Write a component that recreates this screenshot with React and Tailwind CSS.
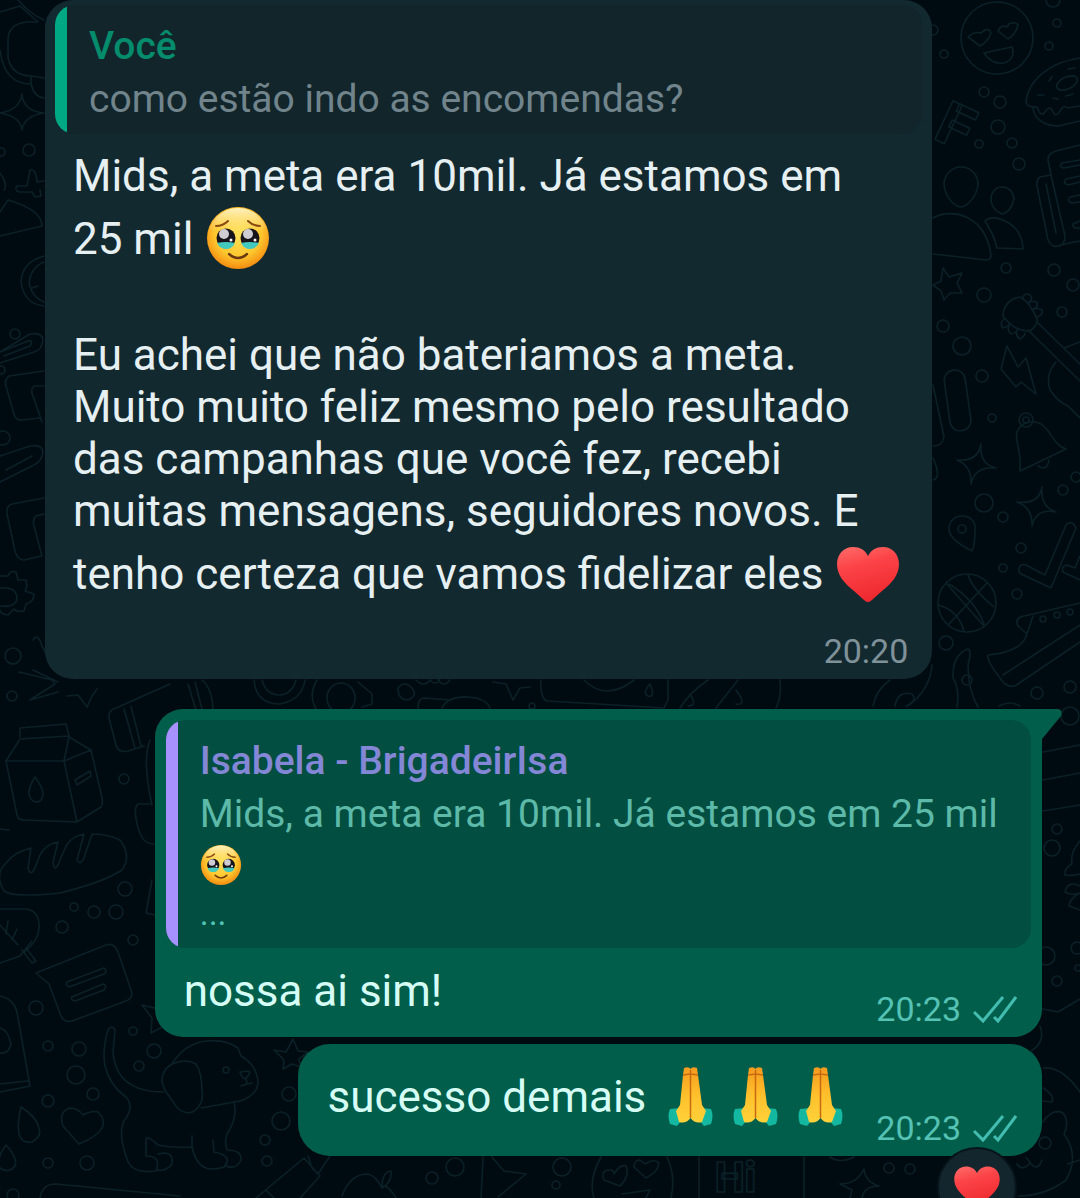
import { useId } from 'react';

const BUBBLES = [
  [1053, 0, 7], [1057, 23, 4], [1049, 46, 4], [933, 30, 5], [944, 54, 4], [984, 92, 5], [1000, 102, 6],
  [998, 127, 7], [979, 144, 4], [1012, 143, 5], [1019, 164, 6], [1006, 268, 5], [1054, 270, 6], [1073, 285, 6],
  [984, 295, 7], [1062, 312, 5], [943, 326, 6], [962, 346, 9], [982, 376, 6], [992, 418, 4], [984, 503, 9],
  [1003, 517, 5], [1021, 548, 5], [1003, 568, 4], [1017, 594, 5], [946, 643, 7], [1063, 490, 5], [1076, 477, 5],
  [1037, 693, 6], [1070, 687, 6], [1070, 716, 9], [1057, 829, 5], [1052, 848, 8], [1046, 956, 9], [1057, 981, 5],
  [1077, 948, 6], [1078, 968, 3], [29, 150, 6], [1, 152, 4], [15, 334, 5], [1, 370, 4], [3, 438, 7], [13, 656, 8],
  [12, 696, 5], [124, 779, 5], [125, 889, 7], [74, 907, 4], [94, 912, 6], [116, 912, 7], [62, 927, 6],
  [133, 940, 5], [36, 1008, 7], [48, 1046, 5], [79, 1049, 7], [76, 1075, 9], [48, 1101, 6],
  [93, 1094, 6], [133, 1031, 4], [154, 1051, 7], [139, 1066, 5], [48, 1163, 5], [87, 1163, 7], [289, 1094, 7],
  [281, 1121, 9], [265, 1140, 5], [267, 1161, 5], [432, 1178, 6], [455, 1167, 9], [562, 1167, 9], [556, 1185, 4],
  [889, 1168, 5], [910, 1169, 5], [13, 1195, 6], [435, 678, 5], [532, 706, 3],
];

const DOODLES = [
  // in-love face
  'M968 37L980 46Q988 42 991 33Q989 28 985 30L981 33Q974 31 968 37Z M998 31L1008 39Q1016 34 1018 25Q1015 21 1009 24L1007 27Q1001 24 998 31Z M984 53L1012 47Q1016 59 1004 63Q992 65 984 53Z',
  // donut
  'M1080 58C1050 62 1028 80 1026 102Q1028 108 1037 107Q1041 118 1045 112Q1050 104 1053 112Q1056 118 1060 111Q1064 104 1067 108L1080 106 M1033 108C1034 120 1046 126 1058 126L1080 121 M1049 81L1052 77 M1068 69L1075 68 M1038 95L1044 95 M1053 98L1058 99 M1066 96L1073 94',
  // people
  'M961 167C972 167 978 176 978 184C977 196 968 206 961 207C953 206 945 196 944 184C944 176 951 167 961 167Z M1002 187C1010 187 1014 194 1014 199C1012 208 1007 213 1002 214C996 212 991 206 991 199C991 193 995 187 1002 187Z M933 218C950 208 985 213 991 255Q991 260 986 260L933 254 M985 221Q990 216 1000 219Q1022 226 1023 249L997 248Q994 235 985 221Z',
  // notebook
  'M1080 145L1056 151Q1048 153 1048 160L1051 175L1040 177Q1036 180 1037 186L1048 240Q1052 248 1058 246L1065 244L1080 241 M1051 175L1065 236Q1065 243 1060 246 M1046 184L1056 233 M1080 160L1062 163Q1058 167 1064 168L1080 165 M1080 176L1066 179Q1062 183 1068 185L1080 182 M1080 195L1070 197Q1066 201 1072 203L1080 202 M1080 221L1073 224Q1072 229 1080 228',
  // stars
  'M943 268L949 277L962 273L957 283L962 293L950 293L944 300L941 291L933 285L941 281Z M142 1005L154 1008L160 1004 M142 1005L152 1018L151 1033L162 1027 M274 1050L286 1052L293 1039L298 1051L308 1052L299 1059L301 1067L292 1064L283 1069L284 1060Z M493 682L506 684L513 700L520 688L530 687',
  // brush
  'M1020 297Q1004 300 1003 316Q1015 332 1030 331Q1038 325 1037 319Q1030 302 1020 297Z M1028 330L1080 381 M1038 323L1080 364 M1023 298Q1024 292 1030 295Q1034 299 1028 303Q1032 300 1037 302Q1039 307 1032 310Q1037 307 1042 310Q1043 316 1036 317 M1004 319Q999 323 1003 328Q1008 327 1010 323Q1006 330 1011 334Q1016 333 1018 329Q1014 335 1020 339Q1025 336 1025 333 M1064 348L1080 342 M1056 362Q1045 374 1050 390Q1058 402 1068 406L1080 418',
  // bolt
  'M1007 346L1018 367L1026 358L1036 394L1021 382L1016 387L1001 369Z',
  // bell
  'M1020 471C1022 450 1014 440 1017 432Q1022 420 1036 422C1050 425 1052 445 1066 449Z M1038 466Q1047 472 1049 460',
  // sparkles
  'M981 444Q979 464 996 468Q975 466 971 484Q972 466 957 460Q978 462 981 444Z M1042 487Q1040 507 1056 512Q1036 508 1032 526Q1033 508 1017 502Q1039 505 1042 487Z M22 94Q23 111 44 113Q24 116 22 130Q20 116 0 113Q20 110 22 94Z M67 696L78 695L87 707L92 696L97 689 M864 1169Q865 1182 879 1186Q864 1186 862 1198 M864 1169Q857 1184 840 1184L852 1190L850 1198',
  // pin
  'M972 551C960 545 949 538 949 529C949 521 955 516 962 516C971 516 976 522 975 530C975 540 974 547 972 551Z',
  // ticks
  'M1019 569Q1020 563 1026 565L1045 575L1066 525Q1072 519 1076 528L1051 588L1021 574Q1018 572 1019 569Z M1080 580L1063 572Q1061 566 1067 565L1075 568L1080 556',
  // ball
  'M946 583L984 626 M948 625L987 583 M968 575Q973 590 994 607 M939 605Q960 612 964 632 M949 584Q975 600 984 624',
  // shoe
  'M1080 603L1020 617Q1015 620 1018 626L1027 634Q1022 652 988 655Q986 660 1000 678Q1006 688 1015 686L1080 642 M1003 675L1080 625 M1027 634L1033 616',
  'M957 707Q960 690 953 678Q952 655 968 649Q972 650 968 665Q968 690 978 707 M933 385L944 437Q943 446 933 446 M933 458Q942 478 933 480 M932 665Q930 690 908 706 M873 706Q876 690 890 680 M895 706Q898 690 912 694Q918 700 906 706 M999 706Q1010 700 1020 706',
  // shelf lines and plant
  'M1043 752L1080 745 M1043 780L1080 773 M1043 811L1080 805 M1080 841Q1070 852 1072 864Q1064 868 1065 875Q1072 876 1080 874 M1080 886Q1068 880 1065 892Q1072 896 1080 893Q1070 898 1069 906L1080 910 M1043 1009L1058 1012L1080 999 M1040 1026Q1046 1042 1031 1051 M1043 1068Q1062 1066 1080 1092 M1043 1088Q1055 1095 1052 1102L1043 1101',
  // cat
  'M1043 1122Q1052 1108 1063 1113Q1070 1122 1064 1134Q1080 1156 1066 1180Q1045 1196 1018 1196 M1068 1164L1080 1160 M1017 1164Q1022 1172 1030 1163Q1028 1158 1026 1158 M1030 1163Q1038 1172 1042 1160',
  // left column
  'M0 12L20 6L38 22L27 22Q8 24 8 40V58Q12 76 32 76L44 78 M0 50Q4 84 31 84V76 M31 84Q34 97 44 98 M18 0Q30 14 44 20 M30 170Q36 168 37 182L44 181 M30 170L27 186L17 186Q14 190 19 192L32 192L35 197L41 196L40 190 M0 236L42 226Q42 210 8 200L0 212 M0 173Q8 184 4 190 M44 256Q22 262 21 282Q24 304 44 306 M44 262Q30 268 29 284Q33 298 44 302 M32 288L38 286 M0 352L30 334Q42 332 43 340Q42 350 34 352L0 363 M4 356L30 346Q34 340 28 341L0 352 M44 371L9 376Q4 380 6 386L14 414Q16 421 22 420L40 418 M44 386L34 386Q30 390 33 396L42 422',
  // paper and clip
  'M0 456L30 446Q42 444 43 452Q42 462 32 466L0 482 M6 470L32 456 M44 498L12 504Q6 506 7 514L14 546Q16 560 24 560L42 556 M44 514L36 516Q32 520 34 526L42 556',
  // gear
  'M0 576L8 576Q10 570 16 572L18 580L26 580Q28 588 25 591L34 594Q34 602 26 604L24 611Q16 612 14 609L8 615Q0 614 0 610 M0 588Q16 586 17 598Q16 608 0 606',
  'M33 640Q38 632 42 646L56 672 M19 672L52 680L55 684L33 698L30 700L58 692 M33 670L58 682',
  // milk carton
  'M20 737V728L66 724L69 736L20 739L6 761L17 815Q18 820 24 820L77 822L101 807Q103 804 102 798L91 750L69 737L64 761L77 822 M6 761L64 761L91 750 M35 777Q28 788 29 795Q32 802 36 802Q43 802 43 793Q42 786 35 777Z M75 780L90 771L91 776L77 785Z',
  // torch
  'M170 684L116 708Q108 710 109 718L116 745Q118 753 128 751L144 746 M124 709L135 748 M131 706L141 746 M188 684L196 710 M195 682L202 709 M202 680Q212 688 213 709 M150 740Q142 760 152 805 M150 804L138 804Q134 808 136 818Q140 845 154 844 M152 880L146 913L155 915',
  // bread
  'M4 891Q-6 874 6 863Q14 852 31 848L28 868Q30 876 34 870L40 855Q46 844 58 842L53 862Q54 872 58 865L66 846Q72 836 84 834L77 860Q80 866 84 858L92 834Q108 834 120 840Q132 856 122 870Q104 882 60 893Q14 898 4 891Z M0 829L9 830',
  // leaf
  'M0 909L27 909Q40 912 39 928Q38 942 24 952 M0 925L18 945 M6 934L8 921 M12 940L17 929 M0 963L20 956L32 941 M22 950L32 963L36 961L26 948',
  // speech card
  'M36 973L106 945Q114 942 118 952L131 990Q134 998 126 1001L72 1021Q64 1023 61 1016L49 984Z M67 982L104 968Q108 971 104 974L69 987Q65 985 67 982Z M72 997L103 984Q108 986 104 990L75 1001Q70 1000 72 997Z',
  // jar
  'M0 996Q14 999 17 1012L30 1086L0 1092 M0 1084L28 1081 M0 1028Q8 1030 11 1044Q9 1054 0 1053',
  // dog
  'M162 1080Q162 1070 172 1064Q186 1058 196 1064Q203 1074 202 1100Q198 1112 188 1113Q178 1112 172 1100Q162 1088 162 1080Z M172 1064Q184 1044 206 1041Q226 1039 238 1048L241 1056Q258 1066 258 1084Q256 1096 240 1101L201 1108 M164 1092Q116 1092 113 1052L115 1030Q112 1024 108 1030Q102 1050 105 1066Q110 1086 126 1097Q134 1106 126 1118Q116 1130 128 1162Q134 1174 156 1171Q162 1156 146 1156V1140Q146 1134 158 1145Q172 1148 192 1147Q198 1176 224 1167Q234 1156 214 1152L213 1140 M158 1154Q174 1150 172 1164Q166 1172 156 1170 M234 1102Q238 1118 227 1134Q224 1140 227 1150Q242 1150 241 1160Q236 1170 226 1166 M192 1147V1136 M240 1072Q242 1080 246 1078Q252 1072 248 1071Z M246 1078L247 1084L241 1086 M247 1084L252 1083',
  // drops and heart
  'M21 1107Q17 1124 19 1134Q22 1144 32 1142Q42 1136 39 1128Q36 1116 21 1107Z M6 1145Q-4 1158 0 1168Q8 1174 15 1166Q18 1158 6 1145Z M79 1144L63 1126Q58 1112 70 1108Q78 1108 83 1115Q92 1110 98 1112Q106 1120 102 1128Q98 1136 79 1144Z',
  'M40 1198Q42 1184 56 1184L180 1196 M256 1198L304 1158L320 1176L300 1198 M308 1156L312 1168L318 1174L330 1156 M266 1190L274 1198 M342 1196Q350 1174 368 1174Q376 1176 382 1188Q386 1182 396 1198 M382 1188Q382 1172 391 1171Q392 1182 382 1188 M483 1157L481 1198 M492 1157L504 1171L526 1174L498 1197 M601 1157Q588 1180 594 1198 M667 1157Q676 1176 671 1198 M620 1186L604 1180Q600 1170 610 1170Q614 1170 614 1174Q620 1164 626 1166Q630 1176 620 1186Z M646 1178L634 1167Q634 1160 640 1160L645 1164Q654 1158 659 1163Q658 1172 646 1178Z M622 1194L650 1190L646 1198 M699 1157V1198 M804 1157V1198 M830 1157Q840 1164 854 1157',
  // strip between the messages
  'M254 680Q256 704 280 704Q302 700 305 680 M262 680Q266 695 280 695Q292 694 296 680 M317 680Q308 695 316 709 M358 682L372 694V704L362 707 M398 688Q398 700 408 700Q418 696 412 688Q404 680 398 688Z M416 680Q424 688 430 680 M438 680Q444 688 450 680 M418 708Q418 698 424 698L450 700 M442 708Q448 696 468 697Q486 698 490 708 M541 680Q540 700 548 701L664 708 M584 680Q606 702 634 680 M650 684Q642 694 648 696Q656 698 650 684Z M668 680V700L664 708 M708 680Q690 692 680 708 M738 680L716 708 M690 694Q698 706 688 706 M736 690Q748 706 736 704 M780 680Q782 696 776 708',
];

function Wallpaper() {
  return (
    <svg
      className="absolute inset-0 h-full w-full"
      viewBox="0 0 1080 1198"
      preserveAspectRatio="xMidYMin slice"
      fill="none"
      stroke="#0b2127"
      strokeWidth="1.6"
      strokeLinejoin="round"
      strokeLinecap="round"
      aria-hidden="true"
    >
      {BUBBLES.map(([x, y, r], i) => <circle key={i} cx={x} cy={y} r={r} />)}
      {DOODLES.map((d) => <path key={d} d={d} />)}
      <circle cx="997" cy="38" r="36" />
      <ellipse cx="1067" cy="83" rx="11" ry="6" transform="rotate(-25 1067 83)" />
      <rect x="947" y="370" width="21" height="61" rx="10" transform="rotate(-8 957 400)" />
      <circle cx="1026" cy="420" r="7" />
      <circle cx="1026" cy="420" r="3" />
      <circle cx="962" cy="529" r="4" />
      <circle cx="967" cy="603" r="29" />
      <circle cx="1043" cy="619" r="3" />
      <circle cx="1057" cy="615" r="3" />
      <circle cx="1070" cy="612" r="3" />
      <circle cx="967" cy="680" r="5" />
      <circle cx="226" cy="1070" r="3" />
      <circle cx="1045" cy="1143" r="6" />
      <ellipse cx="341" cy="698" rx="14" ry="15" />
      <g fontFamily="Roboto, sans-serif" fontWeight="900">
        <text x="932" y="138" fontSize="60" transform="rotate(25 932 138)">F</text>
        <text x="715" y="1192" fontSize="42">Hi</text>
      </g>
    </svg>
  );
}

function TearyFace({ className }) {
  const id = useId();
  return (
    <svg className={className} viewBox="0 0 68 64" role="img" aria-label="rosto segurando as lágrimas">
      <defs>
        <radialGradient id={id} cx="0.5" cy="0.42" r="0.58">
          <stop offset="0.1" stopColor="#ffdf55" />
          <stop offset="0.65" stopColor="#ffc72e" />
          <stop offset="1" stopColor="#f38b10" />
        </radialGradient>
        <linearGradient id={`${id}s`} x1="0" y1="0" x2="0" y2="1">
          <stop offset="0" stopColor="#fff6cf" stopOpacity="0.9" />
          <stop offset="0.4" stopColor="#fff0b0" stopOpacity="0" />
        </linearGradient>
      </defs>
      <circle cx="34" cy="32" r="31" fill={`url(#${id})`} />
      <circle cx="34" cy="32" r="30" fill={`url(#${id}s)`} />
      <path d="M12 20Q19 20 24 15M56 20Q49 20 44 15" fill="none" stroke="#8a4a12" strokeWidth="2" strokeLinecap="round" />
      {[22, 46].map((x) => (
        <g key={x}>
          <circle cx={x} cy="32" r="9.5" fill="#17141c" />
          <path d={`M${x - 9} 37Q${x} 35 ${x + 9} 37Q${x + 6} 43 ${x} 43Q${x - 6} 43 ${x - 9} 37Z`} fill="#43c9bd" />
          <circle cx={x - 2} cy="28" r="5" fill="#cfccd3" />
          <circle cx={x + 5} cy="34" r="1.5" fill="#fff" />
        </g>
      ))}
      <path d="M25 48Q34 56 43 48" fill="none" stroke="#6b3a10" strokeWidth="2.4" strokeLinecap="round" />
    </svg>
  );
}

function Heart({ className }) {
  const id = useId();
  return (
    <svg className={className} viewBox="0 0 68 60" role="img" aria-label="coração">
      <defs>
        <linearGradient id={id} x1="0" y1="0" x2="0.3" y2="1">
          <stop offset="0" stopColor="#ff6d6b" />
          <stop offset="0.4" stopColor="#fc4347" />
          <stop offset="1" stopColor="#ee2a30" />
        </linearGradient>
      </defs>
      <path
        d="M34 57C31 57 27 52 20 46C10 38 3 30 3 19C3 9 10 2 19 2C26 2 31 5 34 11C37 5 42 2 49 2C58 2 65 9 65 19C65 30 58 38 48 46C41 52 37 57 34 57Z"
        fill={`url(#${id})`}
      />
    </svg>
  );
}

function Hands({ className }) {
  const id = useId();
  return (
    <svg className={className} viewBox="0 0 65 62" role="img" aria-label="mãos juntas">
      <defs>
        <linearGradient id={id} x1="0" y1="0" x2="0" y2="1">
          <stop offset="0" stopColor="#f59a1e" />
          <stop offset="0.5" stopColor="#ffc02c" />
          <stop offset="1" stopColor="#ffd23a" />
        </linearGradient>
      </defs>
      <path d="M12 43L22 42L24 54L19 60L12 58Q9 50 12 43Z" fill="#14b8a0" />
      <path d="M53 43L43 42L41 54L46 60L53 58Q56 50 53 43Z" fill="#14b8a0" />
      <path d="M26 2Q31 0 32.500 3Q34 0 39 2L40 9L44 39L48 45L44 56Q37 58 32.500 52Q28 58 21 56L18 45L22 39L25 9Z" fill={`url(#${id})`} />
      <path d="M32.500 4V52M25 9L32 8M40 9L33 8" fill="none" stroke="#c96a12" strokeWidth="1.500" />
    </svg>
  );
}

function Ticks() {
  return (
    <svg className="h-8 w-11" viewBox="0 0 44 32" fill="none" stroke="#43bdb0" strokeWidth="3" role="img" aria-label="entregue">
      <path d="M1 19L10 28L30 4M21 24L25 28L43 4" />
    </svg>
  );
}

function Quote({ author, authorClass, barClass, className, children }) {
  return (
    <blockquote className={`flex overflow-hidden rounded-[20px] ${className}`}>
      <div className={`w-3 shrink-0 ${barClass}`} />
      <div className="min-w-0 flex-1 pt-[15px] pb-2 pl-[22px] text-[39px] leading-[53px]">
        <p className={`font-medium ${authorClass}`}>{author}</p>
        {children}
      </div>
    </blockquote>
  );
}

function SentTime() {
  return (
    <div className="flex shrink-0 items-center gap-3 text-[34px] leading-10 text-[#55c2b4]">
      <time>20:23</time>
      <Ticks />
    </div>
  );
}

export default function App() {
  return (
    <div className="relative h-screen overflow-hidden bg-[#000b11] font-[Roboto,sans-serif]">
      <Wallpaper />
      <main className="relative flex flex-col pr-[38px] pl-[45px]">
        <article className="w-[89%] self-start rounded-[28px] bg-[#12292f] px-[10px] pt-[5px] pb-2 text-[#e6f0f2]">
          <Quote
            author="Você"
            authorClass="text-[#058c6c]"
            barClass="bg-[#00a884]"
            className="bg-[#11252b]"
          >
            <p className="text-[#71848c]">como estão indo as encomendas?</p>
          </Quote>
          <div className="px-[18px] pt-4 text-[44px] leading-[52px]">
            <p>
              Mids, a meta era 10mil. Já estamos em 25&nbsp;mil{' '}
              <TearyFace className="-mb-4 mt-1 inline-block h-16 w-[68px] align-baseline" />
            </p>
            <p className="mt-16">
              Eu achei que não bateriamos a meta. Muito muito feliz mesmo pelo resultado das campanhas que você fez,
              recebi muitas mensagens, seguidores novos. E tenho certeza que vamos fidelizar eles{' '}
              <Heart className="-mb-4 mt-2 inline-block h-[60px] w-[68px] align-baseline" />
            </p>
          </div>
          <div className="mt-[31px] flex justify-end pr-[14px] text-[34px] leading-10 text-[#7f9199]">
            <time>20:20</time>
          </div>
        </article>

        <article className="relative mt-[30px] w-[89%] self-end rounded-[28px] rounded-tr-none bg-[#005e4b] p-[11px] pb-2 text-[#d6fdf5]">
          <svg className="absolute top-0 left-full h-8 w-5" viewBox="0 0 20 32" aria-hidden="true">
            <path d="M-1 0H16Q21 1 19 7L0 30H-1Z" fill="#005e4b" />
          </svg>
          <Quote
            author="Isabela - BrigadeirIsa"
            authorClass="text-[#8487d6]"
            barClass="bg-[#a791ff]"
            className="bg-[#024e40]"
          >
            <p className="text-[#5db9a8]">Mids, a meta era 10mil. Já estamos em 25 mil</p>
            <TearyFace className="-ml-px mt-[2px] h-11 w-11" />
            <p className="text-[34px] text-[#4fc4b6]">...</p>
          </Quote>
          <div className="flex items-end justify-between pr-[14px] pl-[18px]">
            <p className="pt-[17px] pb-3 text-[44px] leading-[52px]">nossa ai sim!</p>
            <SentTime />
          </div>
        </article>

        <article className="relative mt-[7px] flex items-end self-end rounded-[32px] bg-[#005e4b] pt-[22px] pr-[25px] pb-2 pl-[30px] text-[#d6fdf5]">
          <p className="flex items-center pb-5 text-[44px] leading-[52px]">
            <span className="pr-3">sucesso demais</span>
            <Hands className="h-[62px] w-[65px]" />
            <Hands className="h-[62px] w-[65px]" />
            <Hands className="h-[62px] w-[65px]" />
          </p>
          <div className="pl-[23px]">
            <SentTime />
          </div>
          <button
            type="button"
            className="absolute top-[103px] right-[25px] flex size-20 items-center justify-center rounded-full border-2 border-[#07151b] bg-[#14262d]"
          >
            <Heart className="h-11 w-[50px]" />
          </button>
        </article>
      </main>
    </div>
  );
}
